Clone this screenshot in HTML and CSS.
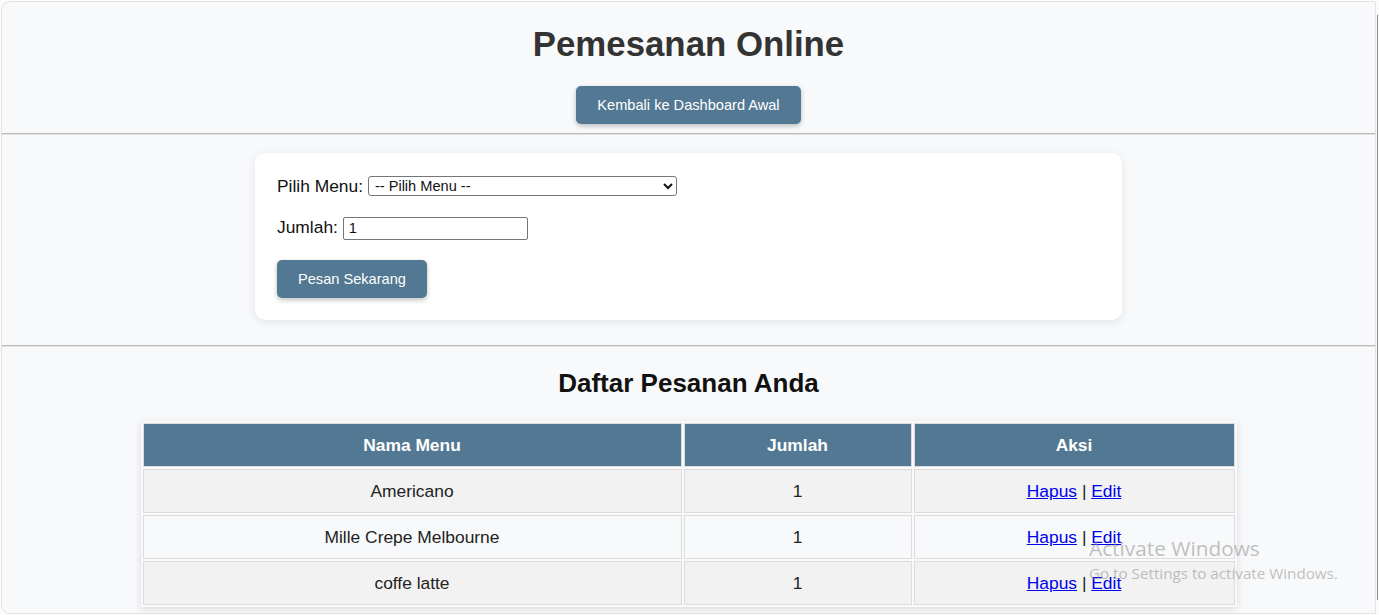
FILE: index.html
```html
<!DOCTYPE html>
<html lang="id">
<head>
<meta charset="utf-8">
<title>Pemesanan Online</title>
<link rel="stylesheet" href="styles.css">
</head>
<body>
<div class="window">
  <h1 class="title">Pemesanan Online</h1>
  <div class="top-actions">
    <a class="btn" href="#">Kembali ke Dashboard Awal</a>
  </div>
  <hr class="divider">
  <form class="card">
    <div class="field field-menu">
      <label for="menu">Pilih Menu:</label>
      <select id="menu" class="select">
        <option>-- Pilih Menu --</option>
      </select>
    </div>
    <div class="field field-qty">
      <label for="jumlah">Jumlah:</label>
      <input id="jumlah" class="input" type="text" value="1">
    </div>
    <button class="btn btn-submit" type="button">Pesan Sekarang</button>
  </form>
  <hr class="divider divider-2">
  <h2 class="subtitle">Daftar Pesanan Anda</h2>
  <table class="orders">
    <thead>
      <tr><th class="c1">Nama Menu</th><th class="c2">Jumlah</th><th class="c3">Aksi</th></tr>
    </thead>
    <tbody>
      <tr class="odd"><td>Americano</td><td>1</td><td><a href="#">Hapus</a> | <a href="#">Edit</a></td></tr>
      <tr class="even"><td>Mille Crepe Melbourne</td><td>1</td><td><a href="#">Hapus</a> | <a href="#">Edit</a></td></tr>
      <tr class="odd"><td>coffe latte</td><td>1</td><td><a href="#">Hapus</a> | <a href="#">Edit</a></td></tr>
    </tbody>
  </table>
</div>
<div class="scrollline"></div>
<div class="watermark">
  <div class="wm-title">Activate Windows</div>
  <div class="wm-sub">Go to Settings to activate Windows.</div>
</div>
</body>
</html>
```
FILE: styles.css
```css
html, body {
  margin: 0;
  padding: 0;
  height: 615px;
  overflow: hidden;
  background: #fbfbfb;
}
body {
  font-family: "Liberation Sans", Arial, sans-serif;
  font-size: 17.4px;
  color: #222;
  position: relative;
}
.window {
  box-sizing: border-box;
  margin: 1px 0 0 1px;
  width: 1375px;
  height: 613px;
  border: 1px solid #e3e3e3;
  border-radius: 9px 0 0 9px;
  background: #f8f9fa;
  overflow: hidden;
}
.title {
  margin: 22px 0 22px;
  font-size: 34.8px;
  line-height: 40px;
  font-weight: bold;
  color: #333;
  text-align: center;
}
.top-actions {
  text-align: center;
}
.btn {
  display: inline-block;
  box-sizing: border-box;
  height: 38px;
  line-height: 38px;
  padding: 0 21px;
  background: #537893;
  color: #fff;
  font-family: "Liberation Sans", Arial, sans-serif;
  font-size: 14.6px;
  text-decoration: none;
  border: none;
  border-radius: 5px;
  box-shadow: 0 2px 5px rgba(0, 0, 0, 0.25);
  vertical-align: top;
}
.divider {
  margin: 9px 0 0;
  height: 0;
  border: none;
  border-top: 1px solid #b9b9b9;
  border-bottom: 1px solid #e2e2e2;
}
.card {
  box-sizing: border-box;
  width: 867px;
  margin: 18px auto 0;
  padding: 22px;
  background: #fff;
  border-radius: 10px;
  box-shadow: 0 2px 10px rgba(0, 0, 0, 0.09);
}
.field {
  line-height: 22px;
  height: 22px;
}
.field-menu {
  margin-bottom: 18px;
}
.field-qty {
  height: 24px;
  line-height: 24px;
  margin-bottom: 21px;
}
.field label {
  color: #111;
}
.select {
  box-sizing: border-box;
  width: 309px;
  height: 20px;
  margin-left: 0;
  padding: 0 2px;
  font-family: "Liberation Sans", Arial, sans-serif;
  font-size: 14.6px;
  color: #111;
  background: #fff;
  border: 1px solid #767676;
  border-radius: 3px;
  vertical-align: 1px;
}
.input {
  box-sizing: border-box;
  width: 185px;
  height: 23px;
  margin-left: 0;
  padding: 1px 5px;
  font-family: "Liberation Sans", Arial, sans-serif;
  font-size: 14.6px;
  color: #111;
  background: #fff;
  border: 1px solid #767676;
  border-radius: 2px;
  vertical-align: middle;
}
.btn-submit {
  display: block;
  padding: 0 21px;
}
.divider-2 {
  margin-top: 25px;
}
.subtitle {
  margin: 21px 0 23px;
  font-size: 26px;
  line-height: 30px;
  font-weight: bold;
  color: #111;
  text-align: center;
}
.orders {
  width: 1096px;
  margin: 0 auto;
  border-collapse: separate;
  border-spacing: 2px;
  table-layout: fixed;
  box-shadow: 0 2px 8px rgba(0, 0, 0, 0.12);
}
.orders th,
.orders td {
  box-sizing: border-box;
  padding: 11px 8px;
  line-height: 20px;
  border: 1px solid #dddddd;
  text-align: center;
}
.orders th {
  background: #537893;
  color: #fff;
  font-weight: bold;
}
.orders .c1 { width: 539px; }
.orders .c2 { width: 228px; }
.orders .c3 { width: 321px; }
.orders tr.odd td { background: #f2f2f2; }
.orders tr.even td { background: #f8f9fa; }
.orders td a {
  color: #0000ee;
  text-decoration: underline;
}
.scrollline {
  position: absolute;
  left: 1377px;
  top: 15px;
  width: 1px;
  height: 585px;
  background: #8c8c8c;
}
.watermark {
  position: absolute;
  left: 1089px;
  top: 535px;
  color: rgba(140, 140, 140, 0.55);
  font-family: "Open Sans", "Noto Sans", sans-serif;
  pointer-events: none;
}
.wm-title {
  font-size: 20.8px;
  line-height: 27px;
}
.wm-sub {
  font-size: 15.2px;
  line-height: 20px;
  margin-top: 1px;
}
```
